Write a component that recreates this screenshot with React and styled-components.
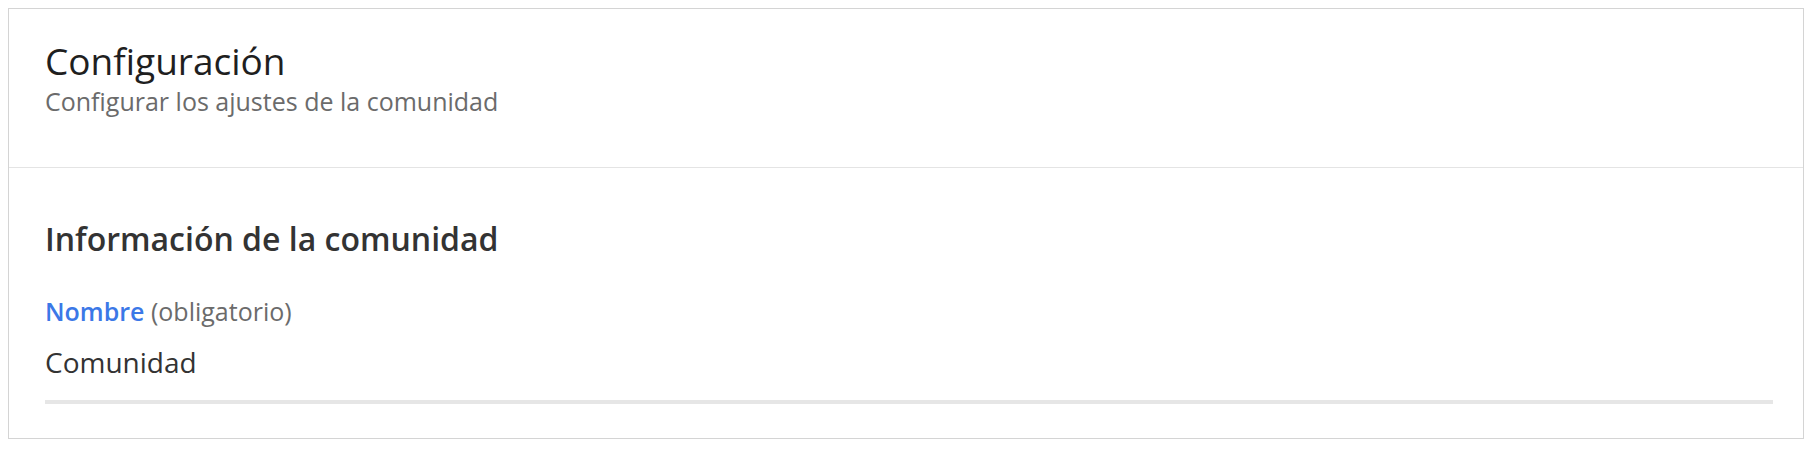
import React from 'react';
import styled, { createGlobalStyle } from 'styled-components';

const GlobalStyle = createGlobalStyle`
  body {
    margin: 8px;
    background: #ffffff;
    font-family: 'Open Sans', 'Noto Sans', sans-serif;
  }
`;

const Card = styled.section`
  background: #fff;
  border: 1px solid #d4d4d4;
  box-shadow: 0 1px 3px rgba(0, 0, 0, 0.18);
`;

const Header = styled.header`
  padding: 28px 30px 50px 36px;
  border-bottom: 1px solid #e4e4e4;
`;

const Title = styled.h1`
  margin: 0;
  font-size: 37px;
  line-height: 48px;
  font-weight: 400;
  color: #1f1f1f;
`;

const Subtitle = styled.p`
  margin: 0;
  font-size: 25px;
  line-height: 32px;
  color: #6b6b6b;
`;

const Body = styled.div`
  padding: 51px 30px 34px 36px;
`;

const SectionTitle = styled.h2`
  margin: 0;
  font-size: 32px;
  line-height: 40px;
  font-weight: 600;
  color: #333;
`;

const Field = styled.div`
  margin-top: 36px;
`;

const Label = styled.label`
  display: block;
  font-size: 25px;
  line-height: 32px;
  color: #6b6b6b;
`;

const LabelName = styled.span`
  color: ${({ color }) => color || '#3b78e7'};
  font-weight: 600;
`;

const Value = styled.div`
  margin-top: 17px;
  padding-bottom: 20px;
  border-bottom: 4px solid #e6e6e6;
  font-size: 28px;
  line-height: 36px;
  color: #333;
`;

function App() {
  return (
    <>
      <GlobalStyle />
      <Card>
        <Header>
          <Title>Configuración</Title>
          <Subtitle>Configurar los ajustes de la comunidad</Subtitle>
        </Header>
        <Body>
          <SectionTitle>Información de la comunidad</SectionTitle>
          <Field>
            <Label>
              <LabelName>Nombre</LabelName> (obligatorio)
            </Label>
            <Value>Comunidad</Value>
          </Field>
        </Body>
      </Card>
    </>
  );
}

export default App;
